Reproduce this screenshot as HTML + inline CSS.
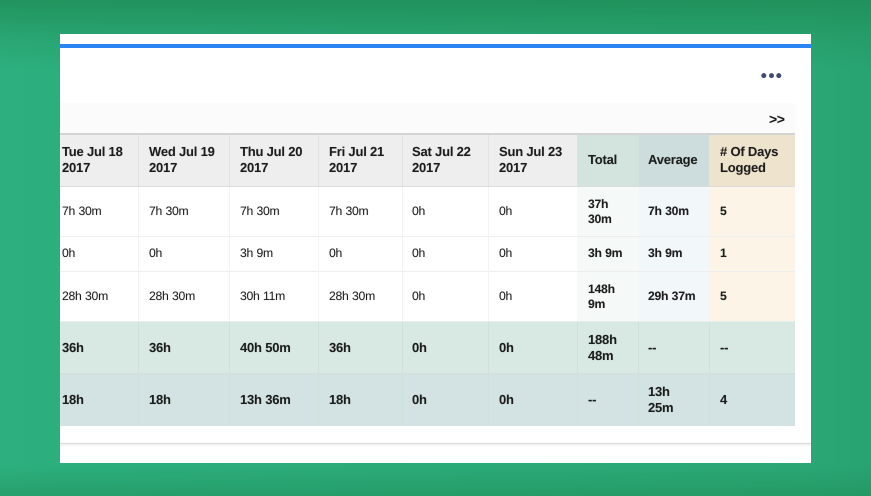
<!DOCTYPE html>
<html><head><meta charset="utf-8">
<style>
html,body{margin:0;padding:0}
body{width:871px;height:496px;overflow:hidden;position:relative;background:#2cae7d;font-family:"Liberation Sans",sans-serif;color:#1c1c1c;text-rendering:geometricPrecision}
.bg{position:absolute;left:0;top:0;width:871px;height:496px;background:linear-gradient(180deg,rgba(30,140,85,.8) 0,rgba(30,140,85,.3) 36px,rgba(30,140,85,0) 70px,rgba(30,140,85,0) 465px,rgba(30,140,85,.45) 496px),linear-gradient(90deg,#2db07f 0,#2cae7d 60px,#2aa774 811px,#28a372 871px)}
.abs{position:absolute}
.t{position:absolute;font-size:13px;line-height:16px;white-space:nowrap;letter-spacing:-.2px;text-shadow:0 0 1px rgba(0,0,0,.22)}
.b{font-weight:bold}
.s{font-size:12.2px;line-height:15px;letter-spacing:-.25px;word-spacing:.3px}
</style></head><body>
<div class="bg"></div>
<div class="abs" style="left:60px;top:34px;width:751px;height:429px;background:#fff"></div>
<div class="abs" style="left:60px;top:44px;width:751px;height:4px;background:#2b84f3"></div>
<svg class="abs" style="left:760px;top:71px" width="24" height="10"><circle cx="3.8" cy="4.6" r="2.5" fill="#414a70"/><circle cx="11.5" cy="4.6" r="2.5" fill="#414a70"/><circle cx="18.8" cy="4.6" r="2.5" fill="#414a70"/></svg>
<div class="abs" style="left:60px;top:103px;width:735px;height:30px;background:#fbfbfb"></div>
<div class="t b" style="left:769px;top:111px;letter-spacing:-.4px;font-size:14px">&gt;&gt;</div>

<!-- header bg -->
<div class="abs" style="left:60px;top:133px;width:735px;height:54px;background:#eeeeee"></div>
<div class="abs" style="left:577px;top:133px;width:62px;height:54px;background:#d3e4de"></div>
<div class="abs" style="left:639px;top:133px;width:70px;height:54px;background:#cddcdc"></div>
<div class="abs" style="left:709px;top:133px;width:86px;height:54px;background:#eee3cc"></div>
<div class="abs" style="left:60px;top:133px;width:735px;height:2px;background:#d4d4d4"></div>
<div class="abs" style="left:60px;top:186px;width:735px;height:1px;background:#dcdcdc"></div>

<!-- summary cols -->
<div class="abs" style="left:577px;top:187px;width:62px;height:135px;background:#f5faf8"></div>
<div class="abs" style="left:639px;top:187px;width:70px;height:135px;background:#f2f8fa"></div>
<div class="abs" style="left:709px;top:187px;width:86px;height:135px;background:#fcf5e7"></div>

<!-- footer rows -->
<div class="abs" style="left:60px;top:322px;width:735px;height:52px;background:#d7e9e2"></div>
<div class="abs" style="left:60px;top:374px;width:735px;height:52px;background:#d3e3e3"></div>

<!-- row lines -->
<div class="abs" style="left:60px;top:236px;width:735px;height:1px;background:#eeeeee"></div>
<div class="abs" style="left:60px;top:271px;width:735px;height:1px;background:#eeeeee"></div>
<div class="abs" style="left:60px;top:321px;width:735px;height:1px;background:#e6eeea"></div>
<div class="abs" style="left:60px;top:373px;width:735px;height:2px;background:#d3dfdc"></div>

<!-- column lines -->
<div class="abs" style="left:138px;top:135px;width:1px;height:51px;background:#e2e2e2"></div>
<div class="abs" style="left:229px;top:135px;width:1px;height:51px;background:#e2e2e2"></div>
<div class="abs" style="left:318px;top:135px;width:1px;height:51px;background:#e2e2e2"></div>
<div class="abs" style="left:402px;top:135px;width:1px;height:51px;background:#e2e2e2"></div>
<div class="abs" style="left:488px;top:135px;width:1px;height:51px;background:#e2e2e2"></div>
<div class="abs" style="left:138px;top:187px;width:1px;height:134px;background:#f3f3f3"></div>
<div class="abs" style="left:229px;top:187px;width:1px;height:134px;background:#f3f3f3"></div>
<div class="abs" style="left:318px;top:187px;width:1px;height:134px;background:#f3f3f3"></div>
<div class="abs" style="left:402px;top:187px;width:1px;height:134px;background:#f3f3f3"></div>
<div class="abs" style="left:488px;top:187px;width:1px;height:134px;background:#f3f3f3"></div>
<div class="abs" style="left:138px;top:322px;width:1px;height:104px;background:#d0e1db"></div>
<div class="abs" style="left:229px;top:322px;width:1px;height:104px;background:#d0e1db"></div>
<div class="abs" style="left:318px;top:322px;width:1px;height:104px;background:#d0e1db"></div>
<div class="abs" style="left:402px;top:322px;width:1px;height:104px;background:#d0e1db"></div>
<div class="abs" style="left:488px;top:322px;width:1px;height:104px;background:#d0e1db"></div>
<div class="abs" style="left:577px;top:322px;width:1px;height:104px;background:#d0e1db"></div>
<div class="abs" style="left:638px;top:322px;width:1px;height:104px;background:#d0e1db"></div>
<div class="abs" style="left:709px;top:322px;width:1px;height:104px;background:#d0e1db"></div>

<!-- bottom shadow -->
<div class="abs" style="left:60px;top:443px;width:751px;height:1px;background:#dcdcdc;box-shadow:0 1px 2px rgba(0,0,0,.16)"></div>

<!-- header text -->
<div class="t b" style="left:62px;top:144px">Tue Jul 18<br>2017</div>
<div class="t b" style="left:149px;top:144px">Wed Jul 19<br>2017</div>
<div class="t b" style="left:240px;top:144px">Thu Jul 20<br>2017</div>
<div class="t b" style="left:329px;top:144px">Fri Jul 21<br>2017</div>
<div class="t b" style="left:412px;top:144px">Sat Jul 22<br>2017</div>
<div class="t b" style="left:499px;top:144px">Sun Jul 23<br>2017</div>
<div class="t b" style="left:588px;top:152px">Total</div>
<div class="t b" style="left:648px;top:152px">Average</div>
<div class="t b" style="left:720px;top:144px"># Of Days<br>Logged</div>

<!-- row 1 -->
<div class="t s" style="left:62px;top:204px">7h 30m</div>
<div class="t s" style="left:149px;top:204px">7h 30m</div>
<div class="t s" style="left:240px;top:204px">7h 30m</div>
<div class="t s" style="left:329px;top:204px">7h 30m</div>
<div class="t s" style="left:412px;top:204px">0h</div>
<div class="t s" style="left:499px;top:204px">0h</div>
<div class="t b s" style="left:588px;top:197px">37h<br>30m</div>
<div class="t b s" style="left:648px;top:204px">7h 30m</div>
<div class="t b s" style="left:720px;top:204px">5</div>

<!-- row 2 -->
<div class="t s" style="left:62px;top:246px">0h</div>
<div class="t s" style="left:149px;top:246px">0h</div>
<div class="t s" style="left:240px;top:246px">3h 9m</div>
<div class="t s" style="left:329px;top:246px">0h</div>
<div class="t s" style="left:412px;top:246px">0h</div>
<div class="t s" style="left:499px;top:246px">0h</div>
<div class="t b s" style="left:588px;top:246px">3h 9m</div>
<div class="t b s" style="left:648px;top:246px">3h 9m</div>
<div class="t b s" style="left:720px;top:246px">1</div>

<!-- row 3 -->
<div class="t s" style="left:62px;top:289px">28h 30m</div>
<div class="t s" style="left:149px;top:289px">28h 30m</div>
<div class="t s" style="left:240px;top:289px">30h 11m</div>
<div class="t s" style="left:329px;top:289px">28h 30m</div>
<div class="t s" style="left:412px;top:289px">0h</div>
<div class="t s" style="left:499px;top:289px">0h</div>
<div class="t b s" style="left:588px;top:282px">148h<br>9m</div>
<div class="t b s" style="left:648px;top:289px">29h 37m</div>
<div class="t b s" style="left:720px;top:289px">5</div>

<!-- row 4 -->
<div class="t b" style="left:62px;top:340px">36h</div>
<div class="t b" style="left:149px;top:340px">36h</div>
<div class="t b" style="left:240px;top:340px">40h 50m</div>
<div class="t b" style="left:329px;top:340px">36h</div>
<div class="t b" style="left:412px;top:340px">0h</div>
<div class="t b" style="left:499px;top:340px">0h</div>
<div class="t b" style="left:588px;top:332px">188h<br>48m</div>
<div class="t b" style="left:648px;top:340px">--</div>
<div class="t b" style="left:720px;top:340px">--</div>

<!-- row 5 -->
<div class="t b" style="left:62px;top:392px">18h</div>
<div class="t b" style="left:149px;top:392px">18h</div>
<div class="t b" style="left:240px;top:392px">13h 36m</div>
<div class="t b" style="left:329px;top:392px">18h</div>
<div class="t b" style="left:412px;top:392px">0h</div>
<div class="t b" style="left:499px;top:392px">0h</div>
<div class="t b" style="left:588px;top:392px">--</div>
<div class="t b" style="left:648px;top:384px">13h<br>25m</div>
<div class="t b" style="left:720px;top:392px">4</div>
</body></html>
